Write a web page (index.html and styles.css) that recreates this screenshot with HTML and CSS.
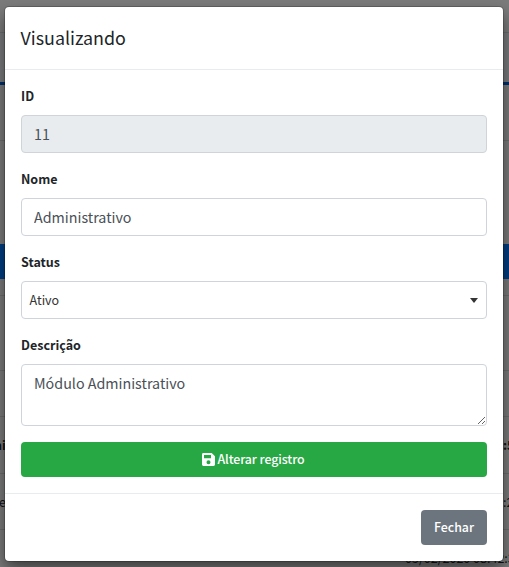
FILE: index.html
```html
<!DOCTYPE html>
<html lang="pt-BR">
<head>
<meta charset="utf-8">
<title>Visualizando</title>
<link rel="stylesheet" href="styles.css">
</head>
<body>
<div class="page" aria-hidden="true">
  <div class="bar top"></div>
  <div class="bar tabs"></div>
  <div class="bar tools"></div>
  <div class="bar gap"></div>
  <div class="bar thead"></div>
  <div class="bar filter"></div>
  <div class="bar spacer"></div>
  <div class="row short"></div>
  <div class="row"><b>ni</b><b>:5</b></div>
  <div class="row"><span>e</span><span>:2</span></div>
  <div class="row last"><span></span><span class="date">05/02/2020 08:42:3</span></div>
</div>
<div class="modal" role="dialog">
  <header class="modal-header"><h5>Visualizando</h5></header>
  <form class="modal-body">
    <div class="group"><label for="id">ID</label><input id="id" class="control" value="11" readonly></div>
    <div class="group"><label for="nome">Nome</label><input id="nome" class="control" value="Administrativo"></div>
    <div class="group">
      <label>Status</label>
      <div class="control select"><span>Ativo</span><svg width="8" height="5" viewBox="0 0 8 5"><path d="M0 0h8L4 5z" fill="#343434"/></svg></div>
    </div>
    <div class="group"><label for="desc">Descrição</label><textarea id="desc" class="control">Módulo Administrativo</textarea></div>
    <button type="button" class="btn save"><svg width="13" height="13" viewBox="0 0 13 13"><path fill="#fff" fill-rule="evenodd" d="M1.4 0h8.3L13 3.3v8.3q0 1.4-1.4 1.4H1.4Q0 13 0 11.6V1.4Q0 0 1.4 0zM2 2v3.2h7V2zM6.5 7.2a2 2 0 1 0 0 4 2 2 0 0 0 0-4z"/></svg><span>Alterar registro</span></button>
  </form>
  <footer class="modal-footer"><button type="button" class="btn close">Fechar</button></footer>
</div>
</body>
</html>
```
FILE: styles.css
```css
* { box-sizing: border-box; }
body {
  margin: 0;
  height: 567px;
  overflow: hidden;
  position: relative;
  background: #797979;
  color: #212529;
  font-family: "Noto Sans CJK SC", "Noto Sans", sans-serif;
}
.page { height: 567px; background: #7b7b7b; font-size: 12.5px; color: #111; }
.bar { border-bottom: 1px solid #6c6c6c; }
.top { height: 33px; }
.tabs { height: 52px; border-bottom: 3px solid #002f6b; background: #787a7c; }
.tools { height: 56px; }
.gap { height: 103px; border: 0; }
.thead { height: 35px; background: #003d80; border: 0; }
.filter { height: 17px; }
.spacer { height: 75px; }
.row {
  height: 56.5px;
  border-bottom: 1px solid #6c6c6c;
  display: flex;
  align-items: center;
  justify-content: space-between;
}
.row.short { height: 46px; }
.row > :first-child { margin-left: -6px; }
.row > span:first-child { margin-left: -1px; }
.row > :last-child { width: 6px; white-space: nowrap; }
.row > .date { width: 104px; }

.modal {
  position: absolute;
  left: 5px;
  top: 7px;
  width: 498px;
  height: 554px;
  background: #fff;
  border-radius: 4px;
  box-shadow: 0 0 0 1px rgba(0, 0, 0, .2), 0 8px 16px rgba(0, 0, 0, .5);
}
.modal-header {
  height: 63px;
  padding: 15px 15.5px 16px;
  border-bottom: 1px solid #e9ecef;
}
h5 { margin: 0; font-size: 17.9px; line-height: 30px; font-weight: 400; }
.modal-body { padding: 16px; }
.group { margin-bottom: 16px; }
label {
  display: block;
  height: 21px;
  margin-bottom: 8px;
  font-size: 12.5px;
  line-height: 19px;
  font-weight: 700;
}
.control {
  display: block;
  width: 100%;
  height: 38px;
  margin: 0;
  padding: 5px 12px 7px;
  border: 1px solid #ced4da;
  border-radius: 4px;
  outline: 0;
  background: #fff;
  color: #495057;
  font-family: inherit;
  font-size: 14.3px;
  line-height: 24px;
}
.control[readonly] { background: #e9ecef; }
textarea.control { height: 62px; padding: 6px 12px; overflow: hidden; resize: vertical; }
.select {
  display: flex;
  align-items: center;
  justify-content: space-between;
  padding: 0 8px 0 7.5px;
  color: #343434;
  font-size: 12.5px;
}
.btn {
  display: flex;
  align-items: center;
  justify-content: center;
  height: 35px;
  padding: 0 0 1px;
  border: 0;
  border-radius: 4px;
  color: #fff;
  font-family: inherit;
  font-size: 12.4px;
  font-weight: 500;
}
.save { width: 100%; gap: 2px; padding-right: 1px; background: #28a745; }
.save span { letter-spacing: -.08px; }
.modal-footer {
  display: flex;
  justify-content: flex-end;
  padding: 16px;
  border-top: 1px solid #e9ecef;
}
.close { width: 66px; background: #6c757d; }
```
